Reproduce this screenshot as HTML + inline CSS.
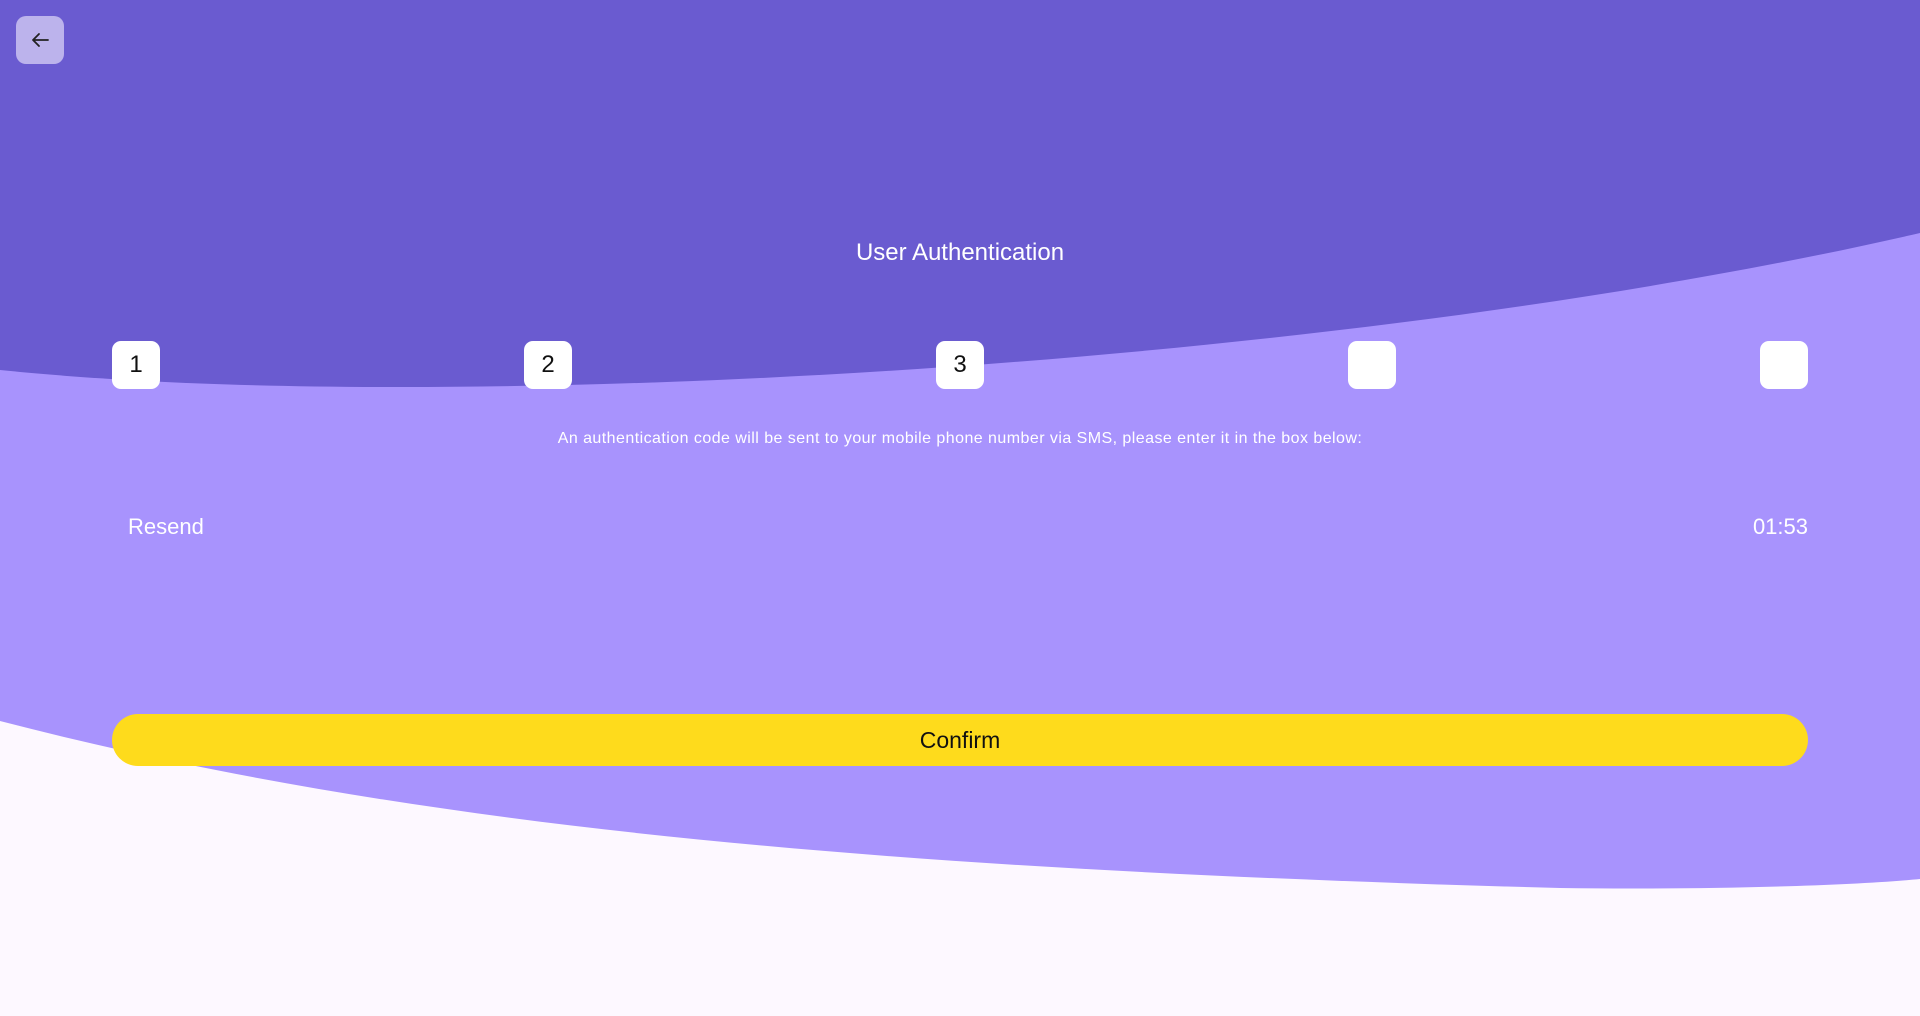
<!DOCTYPE html>
<html><head><meta charset="utf-8"><style>
html,body{margin:0;padding:0;width:1920px;height:1016px;overflow:hidden;background:#fdf8ff;font-family:"Liberation Sans",sans-serif;}
svg.bg{position:absolute;left:0;top:0}
.abs{position:absolute}
.back{left:16px;top:16px;width:48px;height:48px;border-radius:10px;background:#bcb3ec;}
.title{left:0;width:1920px;top:239px;text-align:center;color:#fff;font-size:24px;}
.box{top:341px;width:48px;height:48px;border-radius:9px;background:#fff;color:#111;font-size:24px;text-align:center;line-height:48px;}
.msg{left:0;width:1920px;top:430px;text-align:center;color:#fff;font-size:16px;letter-spacing:0.45px;}
.resend{left:128px;top:514px;color:#fff;font-size:22px;}
.timer{right:112px;top:514px;color:#fff;font-size:22px;}
.confirm{left:112px;top:714px;width:1696px;height:52px;border-radius:26px;background:#fedb1c;color:#111;font-size:23px;text-align:center;line-height:52px;}
</style></head><body>
<svg class="bg" width="1920" height="1016">
<path d="M0,0 H1920 V879 C1850,886 1700,890 1560,888 C900,870 420,830 0,721 Z" fill="#a893fd"/>
<path d="M0,0 H1920 V233 C1500,330 900,387 400,387 C200,387 80,378 0,370 Z" fill="#6a5bd0"/>
</svg>
<div class="abs back"><svg width="48" height="48"><path d="M32,24 H17 M23,18 L17,24 L23,30" stroke="#222" stroke-width="1.8" fill="none" stroke-linecap="round" stroke-linejoin="round"/></svg></div>
<div class="abs title">User Authentication</div>
<div class="abs box" style="left:112px">1</div>
<div class="abs box" style="left:524px">2</div>
<div class="abs box" style="left:936px">3</div>
<div class="abs box" style="left:1348px"></div>
<div class="abs box" style="left:1760px"></div>
<div class="abs msg">An authentication code will be sent to your mobile phone number via SMS, please enter it in the box below:</div>
<div class="abs resend">Resend</div>
<div class="abs timer">01:53</div>
<div class="abs confirm">Confirm</div>
</body></html>
